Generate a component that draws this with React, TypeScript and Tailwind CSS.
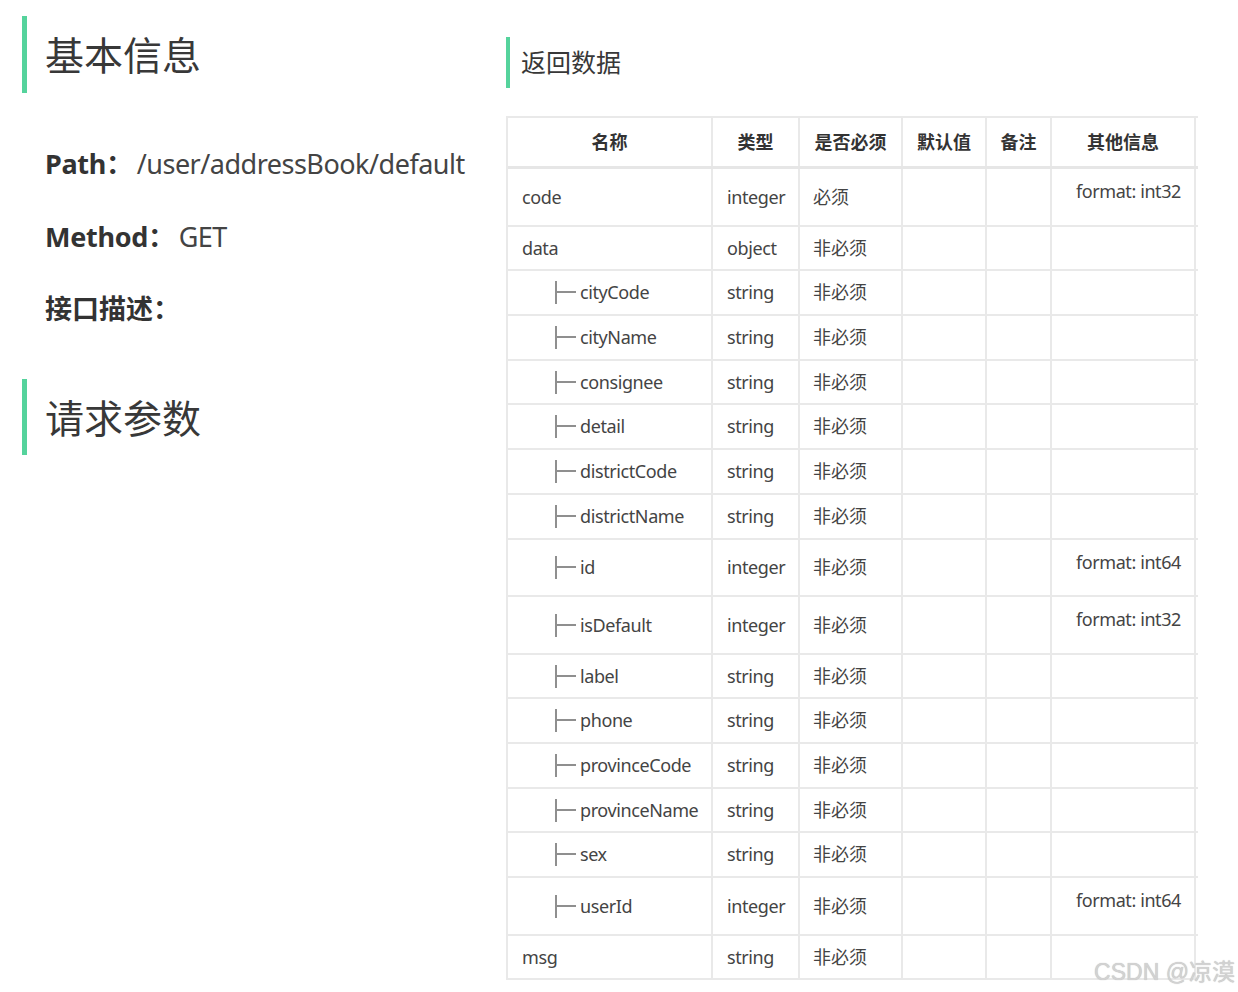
import React from "react";

type Row = {
  name: string;
  type: string;
  req: string;
  other?: string;
  h: string;
  child?: boolean;
};

const rows: Row[] = [
  { name: "code", type: "integer", req: "必须", other: "format: int32", h: "h-[58px]" },
  { name: "data", type: "object", req: "非必须", h: "h-[44px]" },
  { name: "cityCode", type: "string", req: "非必须", h: "h-[45px]", child: true },
  { name: "cityName", type: "string", req: "非必须", h: "h-[45px]", child: true },
  { name: "consignee", type: "string", req: "非必须", h: "h-[44px]", child: true },
  { name: "detail", type: "string", req: "非必须", h: "h-[45px]", child: true },
  { name: "districtCode", type: "string", req: "非必须", h: "h-[45px]", child: true },
  { name: "districtName", type: "string", req: "非必须", h: "h-[45px]", child: true },
  { name: "id", type: "integer", req: "非必须", other: "format: int64", h: "h-[57px]", child: true },
  { name: "isDefault", type: "integer", req: "非必须", other: "format: int32", h: "h-[58px]", child: true },
  { name: "label", type: "string", req: "非必须", h: "h-[44px]", child: true },
  { name: "phone", type: "string", req: "非必须", h: "h-[45px]", child: true },
  { name: "provinceCode", type: "string", req: "非必须", h: "h-[45px]", child: true },
  { name: "provinceName", type: "string", req: "非必须", h: "h-[44px]", child: true },
  { name: "sex", type: "string", req: "非必须", h: "h-[45px]", child: true },
  { name: "userId", type: "integer", req: "非必须", other: "format: int64", h: "h-[58px]", child: true },
  { name: "msg", type: "string", req: "非必须", h: "h-[44px]" },
];

const grid = "grid grid-cols-[205px_87px_103px_84px_65px_144px]";
const cell = "border-r-2 border-[#e9e9e9]";

function Tree() {
  return (
    <span className="relative mr-[4px] inline-block h-[23px] w-[21px] shrink-0">
      <span className="absolute left-0 top-0 h-[23px] w-[2px] bg-[#8f8f8f]" />
      <span className="absolute left-[2px] top-[10px] h-[2px] w-[19px] bg-[#8f8f8f]" />
    </span>
  );
}

export default function App() {
  const font = "font-['Noto_Sans','Noto_Sans_CJK_SC',sans-serif]";
  return (
    <div className={`relative h-[992px] w-[1238px] overflow-hidden bg-white ${font}`}>
      <div className="flex">
        {/* Left column */}
        <div className="ml-[22px] flex w-[484px] flex-col">
          <div className="mt-[16px] flex items-center">
            <div className="h-[77px] w-[5px] bg-[#55d39c]" />
            <h1 className="ml-[18px] text-[39px] leading-none text-[#383838]">基本信息</h1>
          </div>
          <div className="ml-[23px] mt-[54px] flex h-[32px] items-center text-[27px] leading-none">
            <span className="font-bold tracking-[-0.3px] text-[#333]">Path：</span>
            <span className="ml-[4px] tracking-[-0.5px] text-[#444]">/user/addressBook/default</span>
          </div>
          <div className="ml-[23px] mt-[41px] flex h-[32px] items-center text-[27px] leading-none">
            <span className="font-bold tracking-[-0.3px] text-[#333]">Method：</span>
            <span className="ml-[4px] tracking-[-0.5px] text-[#444]">GET</span>
          </div>
          <div className="ml-[23px] mt-[40px] flex h-[32px] items-center text-[27px] leading-none">
            <span className="font-bold text-[#333]">接口描述：</span>
          </div>
          <div className="mt-[55px] flex items-center">
            <div className="h-[76px] w-[5px] bg-[#55d39c]" />
            <h1 className="ml-[18px] text-[39px] leading-none text-[#383838]">请求参数</h1>
          </div>
        </div>

        {/* Right column */}
        <div className="flex flex-col">
          <div className="mt-[37px] flex items-center">
            <div className="h-[51px] w-[4px] bg-[#55d39c]" />
            <h2 className="ml-[11px] text-[25px] leading-none text-[#383838]">返回数据</h2>
          </div>
          <div className="mt-[28px] w-[692px] border-l-2 border-t-2 border-[#e9e9e9] text-[18px] text-[#444]">
            <div className={`${grid} h-[51px] border-b-[3px] border-[#e6e6e6] font-bold text-[#333]`}>
              {["名称", "类型", "是否必须", "默认值", "备注", "其他信息"].map((t) => (
                <div key={t} className={`${cell} flex items-center justify-center`}>
                  {t}
                </div>
              ))}
            </div>
            {rows.map((r) => (
              <div key={r.name} className={`${grid} ${r.h} border-b-2 border-[#e9e9e9]`}>
                <div className={`${cell} flex items-center pl-[14px] tracking-[-0.4px]`}>
                  {r.child && (
                    <span className="ml-[33px] flex items-center">
                      <Tree />
                    </span>
                  )}
                  <span>{r.name}</span>
                </div>
                <div className={`${cell} flex items-center pl-[14px] tracking-[-0.4px]`}>{r.type}</div>
                <div className={`${cell} flex items-center pl-[13px]`}>{r.req}</div>
                <div className={cell} />
                <div className={cell} />
                <div className={`${cell} pr-[13px] pt-[10px] text-right leading-[24px] tracking-[-0.4px]`}>
                  {r.other}
                </div>
              </div>
            ))}
          </div>
        </div>
      </div>

      <div className="absolute right-[3px] top-[956px] font-['Liberation_Sans','Noto_Sans_CJK_SC',sans-serif] text-[23px] leading-[32px] text-[#d2d2d2] [text-shadow:0_0_1px_#b5b5b5]">
        CSDN @凉漠
      </div>
    </div>
  );
}
